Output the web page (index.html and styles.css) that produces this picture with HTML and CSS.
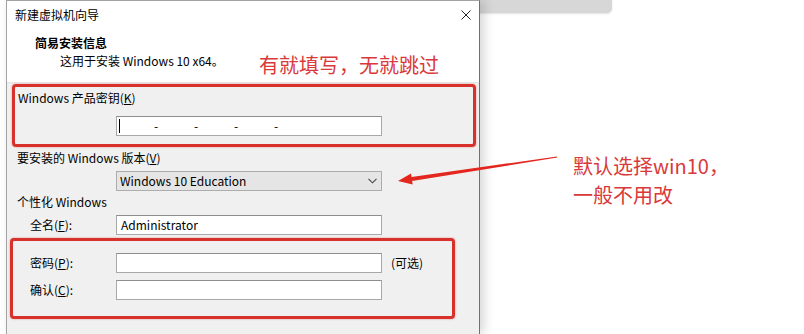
FILE: index.html
```html
<!DOCTYPE html>
<html lang="zh-CN">
<head>
<meta charset="utf-8">
<title>新建虚拟机向导</title>
<link rel="stylesheet" href="styles.css">
</head>
<body>
<div class="page">
  <div class="dialog">
    <div class="titlebar">
      <span class="title">新建虚拟机向导</span>
      <svg class="close" width="10" height="10" viewBox="0 0 10 10"><path d="M0.5 0.5L9.5 9.5M9.5 0.5L0.5 9.5" stroke="#222" stroke-width="1"/></svg>
    </div>
    <div class="header">
      <div class="h-title">简易安装信息</div>
      <div class="h-sub">这用于安装 Windows 10 x64。</div>
      <div class="note note-top">有就填写，无就跳过</div>
    </div>
    <div class="body">
      <div class="mark mark-key">
        <div class="label">Windows 产品密钥(<u>K</u>)</div>
        <div class="field key">
          <span class="caret"></span>
          <span class="dash first">-</span>
          <span class="dash">-</span>
          <span class="dash">-</span>
          <span class="dash">-</span>
        </div>
      </div>
      <div class="label section">要安装的 Windows 版本(<u>V</u>)</div>
      <div class="select">
        <span>Windows 10 Education</span>
        <svg width="9" height="6" viewBox="0 0 9 6"><path d="M0.5 0.8L4.5 4.8L8.5 0.8" fill="none" stroke="#444" stroke-width="1.1"/></svg>
      </div>
      <div class="label section">个性化 Windows</div>
      <div class="row row-name">
        <span class="row-label">全名(<u>F</u>):</span>
        <div class="field">Administrator</div>
      </div>
      <div class="mark mark-pass">
        <div class="row">
          <span class="row-label">密码(<u>P</u>):</span>
          <div class="field"></div>
          <span class="hint">(可选)</span>
        </div>
        <div class="row row-gap">
          <span class="row-label">确认(<u>C</u>):</span>
          <div class="field"></div>
        </div>
      </div>
    </div>
  </div>
  <div class="side">
    <div class="tab"></div>
    <div class="note note-side">默认选择win10，<br>一般不用改</div>
  </div>
  <svg class="arrow" width="175" height="45" viewBox="0 0 175 45">
    <polygon points="8,31 21.05,23.53 21.56,26.99 167,6.5 167.3,7.6 22.14,30.95 22.65,34.41" fill="#e3261e"/>
  </svg>
</div>
</body>
</html>
```
FILE: styles.css
```css
* { box-sizing: border-box; }
html, body { margin: 0; padding: 0; background: #fff; }
body {
  font-family: "Noto Sans CJK SC", "Noto Sans", sans-serif;
  font-size: 12px;
  line-height: 16px;
  color: #000;
}
u { text-underline-offset: 1px; }

.page {
  position: relative;
  display: flex;
  width: 804px;
  height: 334px;
  overflow: hidden;
  padding-left: 6px;
}

.dialog {
  position: relative;
  z-index: 1;
  width: 474px;
  height: 334px;
  flex: none;
  display: flex;
  flex-direction: column;
  background: #fff;
  border: 1px solid #a3a3a3;
  border-bottom: none;
  border-right-color: #707070;
  box-shadow: 4px 0 10px rgba(0, 0, 0, 0.16);
}

.titlebar {
  height: 27px;
  display: flex;
  align-items: center;
  justify-content: space-between;
  padding: 0 8px;
}
.close { display: block; }

.header {
  position: relative;
  height: 55px;
  padding: 7px 0 0 28px;
  border-bottom: 1px solid #e3e3e3;
}
.h-title { font-weight: bold; }
.h-sub { margin: 2px 0 0 25px; }

.note {
  color: #d9393a;
  font-size: 20px;
}
.note-top {
  position: absolute;
  left: 252px;
  top: 27px;
  line-height: 20px;
  white-space: nowrap;
}

.body {
  flex: 1;
  background: #f0f0f0;
}

.mark {
  border: 3px solid #d8312b;
  border-radius: 4px;
  box-shadow: 0 0 2px rgba(216, 49, 43, 0.55);
}
.mark-key {
  margin: 1px 3px 0 5px;
  padding: 3px 0 8px 3px;
}
.mark-pass {
  width: 445px;
  margin: 3px 0 0 3px;
  padding: 12px 0 16px 0;
}

.field {
  width: 266px;
  height: 20px;
  background: #fff;
  border: 1px solid #a8a8a8;
  border-top-color: #8e8e8e;
  padding: 1px 0 0 4px;
  flex: none;
}
.key {
  margin: 10px 0 0 98px;
  display: flex;
  align-items: center;
  padding: 0 0 0 2px;
}
.caret {
  width: 1px;
  height: 14px;
  background: #000;
}
.dash {
  width: 4px;
  margin-left: 36px;
  text-align: center;
  line-height: 12px;
}
.dash.first { margin-left: 34px; }

.section {
  margin-top: 3px;
  padding-left: 10px;
}

.select {
  width: 266px;
  height: 20px;
  margin: 5px 0 0 109px;
  background: #e5e5e5;
  border: 1px solid #adadad;
  display: flex;
  align-items: center;
  justify-content: space-between;
  padding: 0 4px 0 3px;
}

.row {
  display: flex;
  align-items: center;
  height: 20px;
}
.row-label {
  flex: none;
  width: 103px;
  padding-left: 17px;
}
.row-name {
  margin-top: 5px;
}
.row-name .row-label {
  width: 109px;
  padding-left: 23px;
}
.row-gap { margin-top: 7px; }
.hint { margin-left: 9px; }

.side {
  flex: 1;
  display: flex;
  flex-direction: column;
}
.tab {
  width: 132px;
  height: 13px;
  background: #d7d7d7;
  border-radius: 0 0 5px 0;
  box-shadow: 0 1px 2px rgba(0, 0, 0, 0.12);
}
.note-side {
  margin: 138px 0 0 93px;
  line-height: 29px;
}

.arrow {
  position: absolute;
  left: 390px;
  top: 150px;
  z-index: 2;
}
```
